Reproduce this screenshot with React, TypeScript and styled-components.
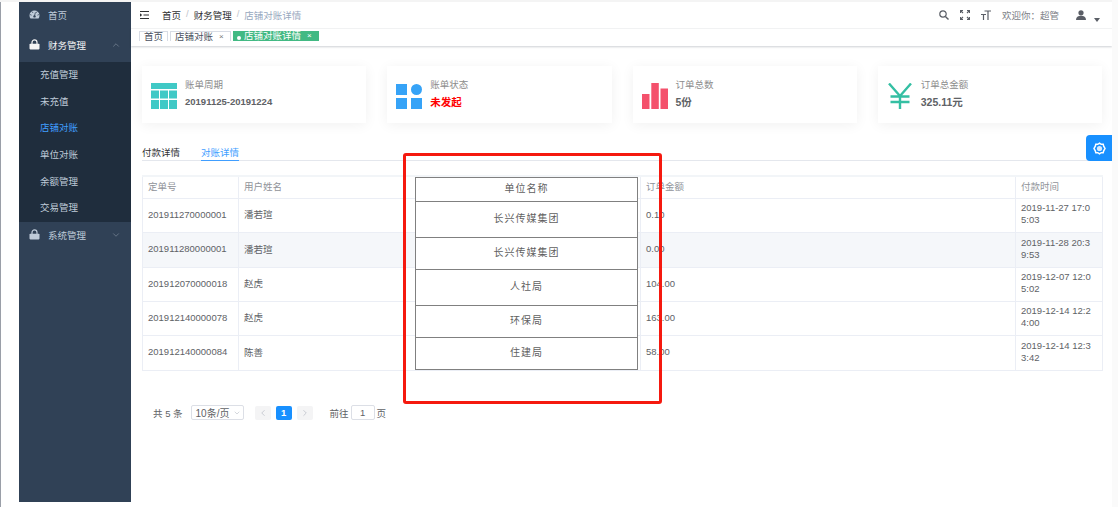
import React from "react";
import styled, { createGlobalStyle } from "styled-components";
import { ChevronDown, ChevronLeft, ChevronRight, ChevronUp } from "lucide-react";

const GlobalStyle = createGlobalStyle`
  html, body {
    margin: 0;
    padding: 0;
    background: #ffffff;
    overflow: hidden;
  }
  * {
    box-sizing: border-box;
  }
  body {
    font-family: "Liberation Sans", "Noto Sans CJK SC", sans-serif;
    font-size: 9.5px;
    color: #606266;
  }
`;

const Page = styled.div`
  position: relative;
  display: flex;
  width: 1118px;
  height: 507px;
  padding: 2px 6px 0 19px;
  background: #ffffff;
  overflow: hidden;
  &::before {
    content: "";
    position: absolute;
    left: 0;
    top: 2px;
    bottom: 0;
    width: 1px;
    background: #9a9fa8;
  }
  &::after {
    content: "";
    position: absolute;
    right: 0;
    top: 0;
    bottom: 0;
    width: 6px;
    background: #fafafa;
  }
`;

const TopLine = styled.div`
  position: absolute;
  left: 0;
  right: 0;
  top: 0;
  height: 2px;
  background: #f4f4f4;
`;

const Sidebar = styled.nav`
  flex: 0 0 112px;
  height: 500px;
  background: #304156;
  color: #bfcbd9;
`;

const MenuItem = styled.div<{ $height: number; $bright?: boolean }>`
  display: flex;
  align-items: center;
  height: ${(p) => p.$height}px;
  padding: 0 10px 3px 10px;
  color: ${(p) => (p.$bright ? "#f4f4f5" : "#bfcbd9")};
  svg.menu-icon {
    flex: 0 0 11px;
    margin-right: 8px;
  }
  span {
    flex: 1;
  }
`;

const SubMenu = styled.div`
  background: #1f2d3d;
  height: 160px;
  display: grid;
  grid-auto-rows: 26.6px;
`;

const SubItem = styled.div<{ $active?: boolean }>`
  display: flex;
  align-items: center;
  padding: 0 0 2px 21px;
  color: ${(p) => (p.$active ? "#409eff" : "#bfcbd9")};
`;

const Main = styled.main`
  flex: 1;
  min-width: 0;
  display: flex;
  flex-direction: column;
`;

const Header = styled.header`
  display: flex;
  align-items: center;
  height: 27px;
  padding: 0 12px 0 9px;
  border-bottom: 1px solid #f4f5f6;
`;

const Breadcrumb = styled.div`
  display: flex;
  gap: 5px;
  margin-left: 13px;
  color: #303133;
  flex: 1;
`;

const Crumb = styled.span<{ $muted?: boolean }>`
  color: ${(p) => (p.$muted ? "#97a8be" : "#303133")};
`;

const Sep = styled.span`
  color: #c0c4cc;
`;

const HeaderTools = styled.div`
  display: flex;
  align-items: center;
  color: #5a5e66;
`;

const Tool = styled.span`
  display: flex;
  margin-right: 11px;
`;

const Welcome = styled.span`
  color: #7d8187;
  margin-right: 17px;
`;

const Caret = styled.span`
  width: 0;
  height: 0;
  margin: 10px 0 0 8px;
  border-left: 3px solid transparent;
  border-right: 3px solid transparent;
  border-top: 4px solid #5a5e66;
`;

const TagBar = styled.div`
  display: flex;
  align-items: flex-start;
  height: 17px;
  padding: 2px 0 0 8px;
  background: #ffffff;
  box-shadow: 0 1px 2px rgba(0, 21, 41, 0.2);
  position: relative;
`;

const Tag = styled.div<{ $active?: boolean; $width: number }>`
  width: ${(p) => p.$width}px;
  height: 10px;
  margin-right: 2px;
  padding-left: 4px;
  display: flex;
  align-items: flex-start;
  line-height: 10px;
  overflow: hidden;
  white-space: nowrap;
  color: ${(p) => (p.$active ? "#ffffff" : "#495060")};
  background: ${(p) => (p.$active ? "#42b983" : "#ffffff")};
  border: ${(p) => (p.$active ? "none" : "1px solid #d8dce5")};
  border-bottom: none;
  i {
    font-style: normal;
    font-size: 8px;
    margin-left: 6px;
    color: ${(p) => (p.$active ? "#ffffff" : "#777")};
  }
`;

const Dot = styled.b`
  flex: 0 0 4px;
  width: 4px;
  height: 4px;
  margin: 5px 3px 0 0;
  border-radius: 50%;
  background: #ffffff;
`;

const Content = styled.section`
  position: relative;
  flex: 1;
  padding: 20px 10px 0 11px;
`;

const Cards = styled.div`
  display: grid;
  grid-template-columns: repeat(4, 1fr);
  gap: 21px;
`;

const Card = styled.div`
  display: flex;
  align-items: center;
  height: 57px;
  padding: 0 0 3px 9px;
  background: #ffffff;
  box-shadow: 0 2px 12px rgba(0, 0, 0, 0.06);
  svg {
    flex: 0 0 26px;
    margin-top: 5px;
    margin-right: 8px;
  }
`;

const CardLabel = styled.div`
  color: #8c8c8c;
  margin-bottom: 5px;
  line-height: 12px;
`;

const CardValue = styled.div<{ $alert?: boolean; $small?: boolean }>`
  font-weight: 700;
  line-height: 12px;
  font-size: ${(p) => (p.$small ? 9.5 : 10.5)}px;
  color: ${(p) => (p.$alert ? "#ff0000" : "#606266")};
`;

const Tabs = styled.div`
  display: flex;
  gap: 21px;
  margin-top: 23px;
  height: 15px;
  border-bottom: 1px solid #e4e7ed;
`;

const TabItem = styled.div<{ $active?: boolean }>`
  height: 15px;
  line-height: 13px;
  color: ${(p) => (p.$active ? "#409eff" : "#303133")};
  border-bottom: ${(p) => (p.$active ? "1px solid #409eff" : "none")};
`;

const DataTable = styled.table`
  width: 960px;
  margin-top: 14px;
  table-layout: fixed;
  border-collapse: collapse;
  th, td {
    padding: 0 5px 2px;
    text-align: left;
    border: 1px solid #ebeef5;
    vertical-align: middle;
  }
  th {
    height: 22px;
    font-weight: 400;
    color: #909399;
    border-top: 2px solid #f2f5f8;
  }
`;

const Row = styled.tr<{ $striped: boolean; $height: number }>`
  height: ${(p) => p.$height}px;
  background: ${(p) => (p.$striped ? "#f5f7fa" : "#ffffff")};
`;

const TimeCell = styled.td`
  line-height: 12px;
  word-break: break-all;
`;

const Pager = styled.div`
  display: flex;
  align-items: center;
  height: 16px;
  margin: 34px 0 0 11px;
  color: #606266;
`;

const PagerSelect = styled.div`
  display: flex;
  align-items: center;
  justify-content: space-between;
  width: 53px;
  height: 15px;
  margin: 0 11px 0 8px;
  padding: 0 2px 0 4px;
  font-size: 10px;
  border: 1px solid #dcdfe6;
  border-radius: 2px;
`;

const PagerButton = styled.div<{ $active?: boolean }>`
  display: flex;
  align-items: center;
  justify-content: center;
  width: 16px;
  height: 14px;
  margin-right: 5px;
  border-radius: 2px;
  font-weight: 700;
  color: ${(p) => (p.$active ? "#ffffff" : "#c0c4cc")};
  background: ${(p) => (p.$active ? "#1890ff" : "#f4f4f5")};
`;

const PagerInput = styled.div`
  display: flex;
  align-items: center;
  justify-content: center;
  width: 24px;
  height: 15px;
  margin: 0 2px;
  border: 1px solid #dcdfe6;
  border-radius: 2px;
`;

const GoLabel = styled.span`
  margin-left: 10px;
  padding-left: 2px;
`;

const SettingsButton = styled.div`
  position: absolute;
  top: 135px;
  left: 1086px;
  display: flex;
  align-items: center;
  justify-content: center;
  width: 26px;
  height: 26px;
  border-radius: 4px 0 0 4px;
  background: #1890ff;
`;

const OverlayTable = styled.table`
  position: absolute;
  left: 415px;
  top: 177px;
  width: 223px;
  table-layout: fixed;
  border-collapse: collapse;
  background: #ffffff;
  font-size: 10px;
  letter-spacing: 1px;
  color: #5f5f5f;
  td {
    padding: 0 0 4px;
    text-align: center;
    border: 1px solid #808080;
  }
`;

const OverlayRow = styled.tr<{ $height: number }>`
  height: ${(p) => p.$height}px;
`;

const RedBox = styled.div`
  position: absolute;
  left: 403px;
  top: 153px;
  width: 259px;
  height: 251px;
  border: 3px solid #f5190f;
  border-radius: 3px;
`;

const rows = [
  { id: "201911270000001", user: "潘若瑄", amount: "0.10", time: "2019-11-27 17:05:03", h: 34 },
  { id: "201911280000001", user: "潘若瑄", amount: "0.00", time: "2019-11-28 20:39:53", h: 35 },
  { id: "201912070000018", user: "赵虎", amount: "104.00", time: "2019-12-07 12:05:02", h: 34 },
  { id: "201912140000078", user: "赵虎", amount: "163.00", time: "2019-12-14 12:24:00", h: 34 },
  { id: "201912140000084", user: "陈善", amount: "58.00", time: "2019-12-14 12:33:42", h: 35 },
];

const units = [
  { name: "单位名称", h: 24 },
  { name: "长兴传媒集团", h: 36 },
  { name: "长兴传媒集团", h: 32 },
  { name: "人社局", h: 36 },
  { name: "环保局", h: 32 },
  { name: "住建局", h: 32 },
];

const subMenus = ["充值管理", "未充值", "店铺对账", "单位对账", "余额管理", "交易管理"];

const LockIcon = ({ color }: { color: string }) => (
  <svg className="menu-icon" width="11" height="11" viewBox="0 0 11 11">
    <path d="M3 5V3.4a2.5 2.5 0 0 1 5 0V5" fill="none" stroke={color} strokeWidth="1.2" />
    <rect x="0.5" y="4.8" width="10" height="5.6" rx="0.8" fill={color} />
  </svg>
);

function App() {
  return (
    <Page>
      <GlobalStyle />
      <TopLine />
      <Sidebar>
        <MenuItem $height={28}>
          <svg className="menu-icon" width="11" height="11" viewBox="0 0 11 11">
            <path
              d="M5.5 1.5a5 5 0 0 0-5 5c0 1.2.4 2.2 1 3h8c.6-.8 1-1.8 1-3a5 5 0 0 0-5-5z"
              fill="#bfcbd9"
            />
            <path d="M3 2.500 4 4M8 2.500 7 4M1 5.500 2.600 6.200M10 5.500 8.400 6.200" stroke="#304156" strokeWidth="0.7" />
            <circle cx="5.5" cy="7.4" r="1.2" fill="#304156" />
            <path d="M5.5 7 6.400 3.400" stroke="#304156" strokeWidth="0.8" />
          </svg>
          <span>首页</span>
        </MenuItem>
        <MenuItem $height={32} $bright>
          <LockIcon color="#f4f4f5" />
          <span>财务管理</span>
          <ChevronUp size={10} color="#6f7d8e" />
        </MenuItem>
        <SubMenu>
          {subMenus.map((name) => (
            <SubItem key={name} $active={name === "店铺对账"}>
              {name}
            </SubItem>
          ))}
        </SubMenu>
        <MenuItem $height={28}>
          <LockIcon color="#bfcbd9" />
          <span>系统管理</span>
          <ChevronDown size={10} color="#6f7d8e" />
        </MenuItem>
      </Sidebar>

      <Main>
        <Header>
          <svg width="9" height="8" viewBox="0 0 9 8">
            <path d="M0 .5h9M0 7.5h9M3.5 4h5.5" stroke="#303133" strokeWidth="1" />
            <path d="M0 2.2 2.2 4 0 5.8z" fill="#303133" />
          </svg>
          <Breadcrumb>
            <Crumb>首页</Crumb>
            <Sep>/</Sep>
            <Crumb>财务管理</Crumb>
            <Sep>/</Sep>
            <Crumb $muted>店铺对账详情</Crumb>
          </Breadcrumb>
          <HeaderTools>
            <Tool>
              <svg width="10" height="10" viewBox="0 0 10 10">
                <circle cx="4" cy="4" r="3.2" fill="none" stroke="#5a5e66" strokeWidth="1.2" />
                <path d="M6.4 6.4 9.5 9.5" stroke="#5a5e66" strokeWidth="1.4" />
              </svg>
            </Tool>
            <Tool>
              <svg width="10" height="10" viewBox="0 0 10 10">
                <path
                  d="M.5 3V.5H3M7 .5h2.500V3M9.500 7v2.500H7M3 9.500H.5V7M1 1l2 2M9 1 7 3M9 9 7 7M1 9l2-2"
                  fill="none"
                  stroke="#5a5e66"
                  strokeWidth="1.1"
                />
              </svg>
            </Tool>
            <Tool>
              <svg width="10" height="10" viewBox="0 0 10 10">
                <path d="M3.5 1h6.5M7 1v9M0 4.5h5M2.5 4.5V10" fill="none" stroke="#5a5e66" strokeWidth="1.2" />
              </svg>
            </Tool>
            <Welcome>欢迎你：超管</Welcome>
            <svg width="10" height="10" viewBox="0 0 10 10">
              <circle cx="5" cy="2.8" r="2.6" fill="#5a5e66" />
              <path d="M0 10c0-3 2-4.200 5-4.200s5 1.200 5 4.200z" fill="#5a5e66" />
            </svg>
            <Caret />
          </HeaderTools>
        </Header>

        <TagBar>
          <Tag $width={29}>首页</Tag>
          <Tag $width={61}>
            店铺对账<i>×</i>
          </Tag>
          <Tag $width={86} $active>
            <Dot />
            店铺对账详情<i>×</i>
          </Tag>
        </TagBar>

        <Content>
          <Cards>
            <Card>
              <svg width="26" height="26" viewBox="0 0 26 26">
                <path
                  d="M0 0h26v6H0zM0 7.500h8v8H0zM9 7.500h8v8H9zM18 7.500h8v8h-8zM0 17h8v9H0zM9 17h8v9H9zM18 17h8v9h-8z"
                  fill="#40c9c6"
                />
              </svg>
              <div>
                <CardLabel>账单周期</CardLabel>
                <CardValue $small>20191125-20191224</CardValue>
              </div>
            </Card>
            <Card>
              <svg width="26" height="26" viewBox="0 0 26 26">
                <path d="M0 1h11v11H0zM0 15h11v11H0zM15 15h11v11H15z" fill="#36a3f7" />
                <circle cx="20.500" cy="6.500" r="5.500" fill="#36a3f7" />
              </svg>
              <div>
                <CardLabel>账单状态</CardLabel>
                <CardValue $alert>未发起</CardValue>
              </div>
            </Card>
            <Card>
              <svg width="26" height="26" viewBox="0 0 26 26">
                <path d="M0 11h7.500v15H0zM9.300 0h7.500v26H9.300zM18.500 5.500H26V26h-7.500z" fill="#f4516c" />
              </svg>
              <div>
                <CardLabel>订单总数</CardLabel>
                <CardValue>5份</CardValue>
              </div>
            </Card>
            <Card>
              <svg width="26" height="26" viewBox="0 0 26 26">
                <path
                  d="M2 0.500 13 13 24 0.500M13 13v13M3.500 13.500h19M3.500 19h19"
                  fill="none"
                  stroke="#34bfa3"
                  strokeWidth="2.400"
                />
              </svg>
              <div>
                <CardLabel>订单总金额</CardLabel>
                <CardValue>325.11元</CardValue>
              </div>
            </Card>
          </Cards>

          <Tabs>
            <TabItem>付款详情</TabItem>
            <TabItem $active>对账详情</TabItem>
          </Tabs>

          <DataTable>
            <colgroup>
              <col width="96" />
              <col width="180" />
              <col width="222" />
              <col width="375" />
              <col width="87" />
            </colgroup>
            <thead>
              <tr>
                <th>定单号</th>
                <th>用户姓名</th>
                <th />
                <th>订单金额</th>
                <th>付款时间</th>
              </tr>
            </thead>
            <tbody>
              {rows.map((r, i) => (
                <Row key={r.id} $striped={i === 1} $height={r.h}>
                  <td>{r.id}</td>
                  <td>{r.user}</td>
                  <td />
                  <td>{r.amount}</td>
                  <TimeCell>{r.time}</TimeCell>
                </Row>
              ))}
            </tbody>
          </DataTable>

          <Pager>
            <span>共 5 条</span>
            <PagerSelect>
              10条/页
              <ChevronDown size={8} color="#c0c4cc" />
            </PagerSelect>
            <PagerButton>
              <ChevronLeft size={10} />
            </PagerButton>
            <PagerButton $active>1</PagerButton>
            <PagerButton>
              <ChevronRight size={10} />
            </PagerButton>
            <GoLabel>前往</GoLabel>
            <PagerInput>1</PagerInput>
            <span>页</span>
          </Pager>
        </Content>
      </Main>

      <SettingsButton>
        <svg width="13" height="13" viewBox="0 0 13 13">
          <path
            d="M6.500 1.200 8.200 2.300 10.200 2.300 10.700 4.200 12 6.500 10.700 8.800 10.200 10.700 8.200 10.700 6.500 11.800 4.800 10.700 2.800 10.700 2.300 8.800 1 6.500 2.300 4.200 2.800 2.300 4.800 2.300Z"
            fill="none"
            stroke="#ffffff"
            strokeWidth="1.500"
          />
          <circle cx="6.500" cy="6.500" r="2.600" fill="#d6eaff" />
        </svg>
      </SettingsButton>

      <OverlayTable>
        <tbody>
          {units.map((u, i) => (
            <OverlayRow key={i} $height={u.h}>
              <td>{u.name}</td>
            </OverlayRow>
          ))}
        </tbody>
      </OverlayTable>
      <RedBox />
    </Page>
  );
}

export default App;
